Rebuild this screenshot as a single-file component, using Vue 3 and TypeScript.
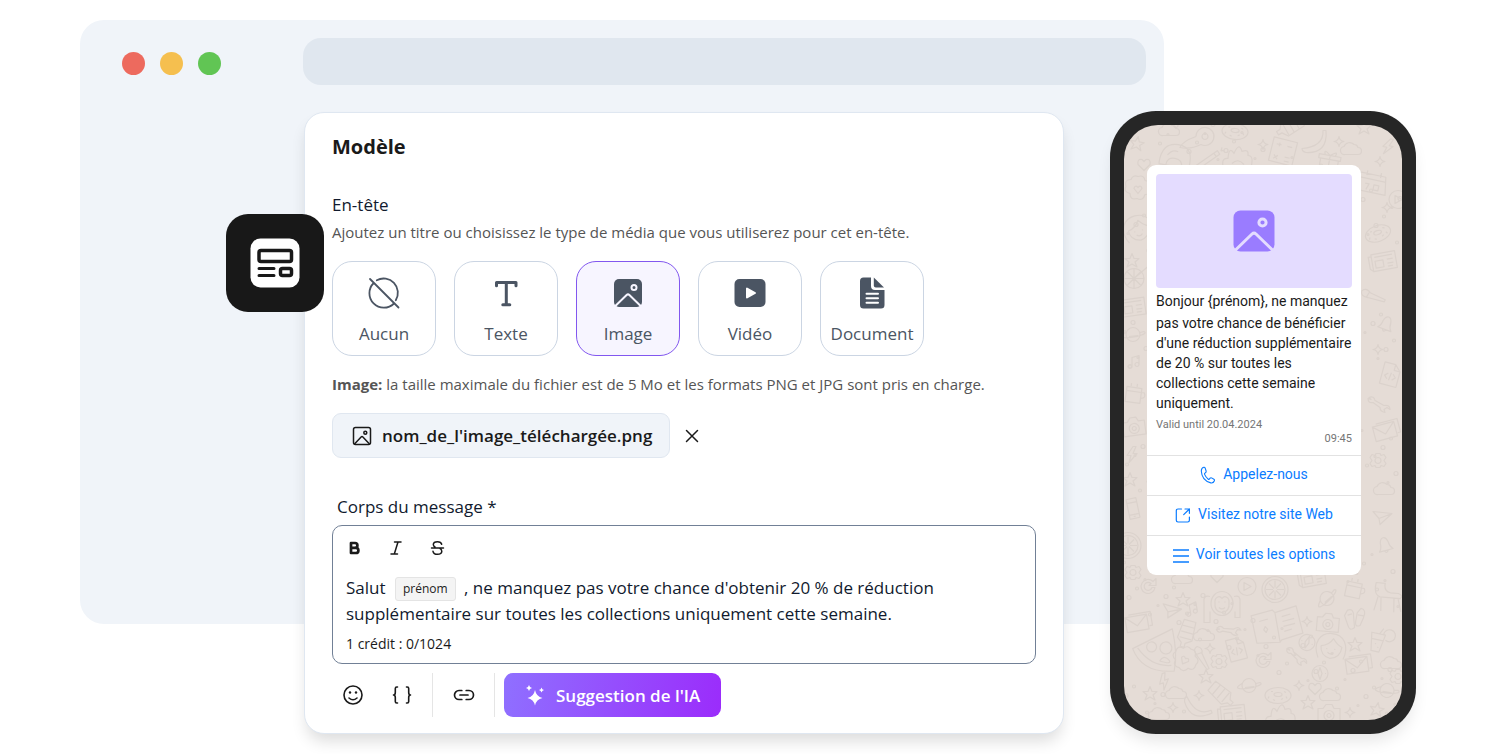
<script setup lang="ts">
import { ref } from 'vue'

type Kind = 'none' | 'text' | 'image' | 'video' | 'document'
interface HeaderOption { kind: Kind; label: string }
type Doodle = [shape: string, x: number, y: number, turn: number]
interface Dot { x: number; y: number; r: number }

const options: HeaderOption[] = [
  { kind: 'none', label: 'Aucun' },
  { kind: 'text', label: 'Texte' },
  { kind: 'image', label: 'Image' },
  { kind: 'video', label: 'Vidéo' },
  { kind: 'document', label: 'Document' },
]
const selected = ref<Kind>('image')

const shapes: Record<string, string> = {
  star: 'M0-7 2-2 7-2 3 1.500 5 6.500 0 3.500-5 6.500-3 1.500-7-2-2-2Z',
  spark: 'M0-5Q.6-.6 5 0 .6.6 0 5-.6.6-5 0-.6-.6 0-5Z',
  cloud: 'M-7 5a4 4 0 0 1-1-8 6 6 0 0 1 10-2 4 4 0 0 1 4 3 3.500 3.500 0 0 1 0 7Z',
  banana: 'M8-11Q9 5-13 7-13 10-9 11 13 12 11-11Z',
  donut: 'M-13 0a13 8 0 1 0 26 0 13 8 0 1 0-26 0M-4-1a4 2 0 1 0 8 0 4 2 0 1 0-8 0M-9 1l-1 2M-5 4l2 1M3 4l2-1M8 1l1 2M6-4l2 1M-7-4l2 0',
  orange: 'M-13 0a13 13 0 1 0 26 0 13 13 0 1 0-26 0M-10 0a10 10 0 1 0 20 0 10 10 0 1 0-20 0M0-2V-9M0 2V9M-2 0H-9M2 0H9M-1-1-6-6M1 1 6 6M1-1 6-6M-1 1-6 6',
  play: 'M-9 0a9 9 0 1 0 18 0 9 9 0 1 0-18 0M-3-4 4 0-3 4Z',
  monkey: 'M-11 0a11 12 0 1 0 22 0 11 12 0 1 0-22 0M-7-1a4 5 0 0 1 7-4 4 5 0 0 1 7 4Q8 8 0 9-8 8-7-1M-3-2v1M3-2v1M-3 4Q0 7 3 4M-12-7q-7-2-6 6v20h6V8M12-7q7-2 6 6v15h-5V8',
  book: 'M-24-13-2-15 0-12 22-15 24 13 2 16 0 18-23 15ZM0-12 0 18M-17-6-8-7M-14 3l2-3 2 3-2 3ZM6-7 15-8M6-2 18-3M6 3 18 2M6 8 14 7',
  camera: 'M-11-5h5l3-4h6l2 4h6V9h-22ZM-5 2a5 5 0 1 0 10 0 5 5 0 1 0-10 0M-2 2a2 2 0 1 0 4 0 2 2 0 1 0-4 0',
  face: 'M-12 12q-5-10-1-18 4-7 13-7 9 0 13 7 4 8 0 18M-10 0Q-2-1 2-8 6-2 11 0 10 11 0 12-10 10-10 0M-4 2v1M4 2v1M-3 6Q0 9 3 6',
  envelope: 'M-13-8h22V7h-22ZM-13-8-2 2 9-8M-9-10h22V4h-3',
  pizza: 'M-22-4 20-18Q22 8 16 24-16 22-22-4ZM-17-4Q-6 17 14 18M-8-3a5 5 0 1 0 10 0 5 5 0 1 0-10 0M5 0a6 6 0 1 0 12 0 6 6 0 1 0-12 0M3 12q5-6 9 0t-9 0',
  tube: 'M-6-12h12l1 19-6 4v4h-4v-4l-5-4ZM-6-6H6M-6 0H6M-6 6H6',
  file: 'M-8-11h11l6 6v16h-17ZM3-11v6h6M-2-1-5 2-2 5M3-1 6 2 3 5M1-2 0 6',
  gear: 'M-2-7h4l1 2 3-1 2 3-2 3 2 3-2 3-3-1-1 2h-4l-1-2-3 1-2-3 2-3-2-3 2-3 3 1ZM-3 0a3 3 0 1 0 6 0 3 3 0 1 0-6 0',
  compass: 'M-8 0a8 8 0 1 0 16 0 8 8 0 1 0-16 0M0-6 2 0 0 6-2 0ZM-6 0h1M5 0h1',
  planet: 'M-7 0a7 7 0 1 0 14 0 7 7 0 1 0-14 0M-7-2q-7 4-3 5t14-1Q15-1 11-3L7-2M-4 2 5 1',
  news: 'M-13-8h24V9h-24ZM-10-5H8M-10-1h8v7h-8ZM2-1h6M2 3h6M2 6h5M-13-6h-3V6l3 3',
  music: 'M-3 4v-9l7-2v9M-7 4a2 2 0 1 0 4 0 2 2 0 1 0-4 0M0 2a2 2 0 1 0 4 0 2 2 0 1 0-4 0',
  bolt: 'M1-8-5 1h4l-2 7L5-1H1l3-7Z',
  drink: 'M-7-8H7L4 10H-4ZM-6-2H6M1-8 4-14M5-8a6 6 0 1 1 3 5M-1 2v1M2 5v1',
  wrench: 'M-10-5q5-2 6 3L5 3q6-1 6 4L8 5 5 7 6 10Q1 9 1 5L-6 0Q-11 1-11-4l3 1Z',
  brush: 'M-4-11Q-9-8-4-2L6 12 8 11 1-4Q2-10-4-11M-5-3 1-5',
  mug: 'M-8-7h15v15h-15ZM-8-3H7M7-3h3q3 5-3 6M-4-11v3M2-11v3',
  chair: 'M-12-14Q-14-2-7 0h20Q17-3 11-5H3q-7-1-6-9ZM-9 0-12 14M-6 0-5 14M7 0 8 14M11 0 15 13',
  sandals: 'M-9-8Q-3-11-2-3L1 8Q-3 13-6 7L-11-2ZM-8-3l4-2M4-12Q10-12 8-3L6 5Q1 8 1 2V-7ZM2-5l6 0',
  plane: 'M-10-6 9-4-3 7-4 1ZM-4 1 9-4',
  dice: 'M-12-12H12V12H-12ZM-8-6h5M-5-8v4M3-6h5M-8 5l4 4M-8 9l4-4M3 5h5M3 9h5',
  flame: 'M-14 12q-4-13 4-12 1-13 6-5 5-12 8-2 7-3 6 4 7 0 2 15M-14 12H12M-6 5q6-6 12 1',
  pot: 'M-16 8q-1-22 16-22T14 8M-16 8H14M-9-2q4-7 10-5M-9 8q0-8 8-8t8 8',
  flower: 'M0-12q6-2 7 4 7 1 5 7 2 7-5 7-2 7-8 4-7 2-7-5-7-2-4-7-2-7 5-7 2-5 7-3ZM0 5-4 0q1-4 4-1 3-3 4 1Z',
  calendar: 'M-14-10H12l3 18h-28ZM-7-13v5M7-13v5M-14-5H13M-7 0h4l-2 6M2 0h5v5H2Z',
  gift: 'M-9-3H9V9H-9ZM-11-7h22v4h-22ZM0-7V9M0-7q-8-7-5 0M0-7q8-7 5 0',
  wheel: 'M-10 0a10 10 0 1 0 20 0 10 10 0 1 0-20 0M0-10V10M-10 0H10M-7-7 7 7M-7 7 7-7M0 0 14-12h5',
  wand: 'M-12 10 6-8 9-5-9 13ZM3-5 6-2M10-12v4M13-9h-4',
  heart: 'M0 6-6 0q-1-6 4-5l2 2 2-2q5-1 4 5Z',
  turn: 'M5-5a7 7 0 1 0 2 6h-3a4 4 0 1 1-1-4L1-1h7v-7Z',
  egg: 'M-6 0a9 9 0 1 1 5 8Q-11 13-22 11-20 5-6 0M0 0a3 3 0 1 0 6 0 3 3 0 1 0-6 0',
  bell: 'M-7 5q3-3 3-8 1-5 4-5t4 5q0 5 3 8ZM-2 5q2 4 4 0',
  phone: 'M-5-10h10v20h-10ZM-5-6H5M-5 6H5M-1 8h2',
}

const doodles: Doodle[] = [
  ['egg', 78, 12, 0], ['donut', 111, 7, 5], ['dice', 159, 27, 14], ['banana', 191, 17, 0], ['cloud', 228, 25, 0],
  ['bolt', 264, 22, 12], ['star', 13, 19, 10], ['spark', 139, 20, 0], ['spark', 215, 17, 0], ['spark', 256, 37, 0],
  ['flame', 114, 34, 0], ['pot', 52, 34, 10], ['wand', 86, 33, 10], ['gift', 205, 38, 10], ['heart', 20, 40, 0],
  ['cloud', 46, 6, 0], ['tube', 167, 2, 60], ['star', 240, 3, 0], ['flower', 14, 64, 0], ['calendar', 248, 60, 12],
  ['spark', 263, 83, 0], ['play', 274, 75, 0], ['face', 14, 104, -15], ['donut', 254, 109, -20], ['star', 8, 136, 0],
  ['news', 261, 136, -10], ['wheel', 10, 154, 0], ['brush', 248, 172, -40], ['news', 10, 182, -8], ['bell', 262, 200, 20],
  ['planet', 9, 210, 0], ['spark', 254, 225, 0], ['music', 11, 238, 0], ['file', 266, 250, 15], ['mug', 10, 270, 8],
  ['wrench', 255, 278, 0], ['camera', 10, 302, -8], ['envelope', 263, 307, -15], ['bolt', 8, 330, 0], ['gear', 254, 336, 0],
  ['star', 6, 355, 0], ['cloud', 261, 365, 0], ['phone', 9, 384, -12], ['plane', 259, 393, 0], ['orange', 4, 421, 0],
  ['bell', 261, 421, -15], ['gear', 9, 448, 0], ['turn', 24, 462, 0], ['cloud', 59, 454, 0], ['heart', 93, 452, 0],
  ['play', 123, 462, 0], ['orange', 151, 465, 0], ['news', 190, 452, -10], ['planet', 203, 474, -35], ['mug', 230, 465, 12],
  ['chair', 263, 473, 5], ['star', 59, 475, 0], ['monkey', 98, 479, 0], ['music', 69, 485, -10], ['plane', 48, 487, 10],
  ['envelope', 15, 499, -10], ['tube', 63, 508, 15], ['wrench', 104, 504, -25], ['book', 153, 500, -10], ['spark', 183, 497, 0],
  ['camera', 204, 498, 5], ['sandals', 231, 495, 10], ['drink', 253, 517, 12], ['cloud', 81, 511, 0], ['pizza', 31, 525, -8],
  ['brush', 77, 533, 0], ['spark', 86, 524, 0], ['file', 112, 525, -15], ['gear', 95, 537, 0], ['turn', 139, 536, 0],
  ['wrench', 173, 530, 10], ['compass', 183, 518, 20], ['face', 207, 522, 5], ['star', 231, 520, 0], ['envelope', 235, 541, -8],
  ['cloud', 268, 539, 0], ['flower', 61, 535, 30], ['bolt', 40, 557, -20], ['star', 82, 552, 0], ['compass', 196, 549, 0],
  ['planet', 125, 561, 0], ['spark', 175, 561, 0], ['heart', 191, 564, 0], ['planet', 263, 566, 15], ['star', 26, 569, 0],
  ['cloud', 53, 569, 0], ['spark', 75, 571, 0], ['tube', 97, 569, -50], ['donut', 154, 571, 0], ['cloud', 207, 571, 0],
  ['star', 184, 578, 0], ['banana', 74, 582, 70], ['spark', 49, 583, 0], ['cloud', 36, 590, 0], ['news', 110, 589, -6],
  ['camera', 205, 589, 0], ['spark', 226, 588, 0], ['star', 253, 585, 10], ['flame', 157, 592, 0], ['gear', 274, 552, 0],
]

const dots: Dot[] = Array.from({ length: 230 }, (_, i) => ({
  x: (i * 89 + 7) % 277,
  y: (i * 157 + 11) % 595,
  r: 1 + (i % 3) / 2,
}))
</script>

<template>
  <main class="stage">
    <div class="browser">
      <span class="dot red"></span><span class="dot amber"></span><span class="dot green"></span>
      <div class="address"></div>
    </div>

    <section class="card" aria-labelledby="card-title">
      <div class="badge">
        <svg width="98" height="98" viewBox="0 0 98 98" aria-hidden="true">
          <rect x="24.500" y="24.500" width="49" height="49" rx="10" fill="#fff" />
          <g fill="none" stroke="#181818" stroke-width="3.500" stroke-linecap="round">
            <rect x="33" y="36.500" width="32.500" height="11" rx="2" />
            <path d="M33 54.500h15M33 61.500h15" stroke-width="3" />
            <rect x="54.500" y="54.500" width="11" height="7" rx="2" />
          </g>
        </svg>
      </div>

      <h1 id="card-title">Modèle</h1>
      <h2>En-tête</h2>
      <p class="hint">Ajoutez un titre ou choisissez le type de média que vous utiliserez pour cet en-tête.</p>

      <div class="options">
        <button v-for="o in options" :key="o.kind" type="button" class="option"
          :class="{ active: selected === o.kind }" :aria-pressed="selected === o.kind" @click="selected = o.kind">
          <svg width="34" height="34" viewBox="0 0 34 34" aria-hidden="true">
            <g v-if="o.kind === 'none'" fill="none" stroke="#4b5563" stroke-width="1.800" stroke-linecap="round">
              <path d="M9.800 4.200a14.300 14.300 0 0 1 19 20M27 27.500A14.300 14.300 0 0 1 6.700 7M3 3l28.500 28.500" />
            </g>
            <path v-else-if="o.kind === 'text'" fill="none" stroke="#4b5563" stroke-width="3" stroke-linecap="round"
              stroke-linejoin="round" d="M7.500 9.700V6.500h19.500v3.200M17.300 6.500v22.200M13.800 28.700h7" />
            <g v-else-if="o.kind === 'image'">
              <rect x="3" y="3" width="28" height="28" rx="5" fill="#4b5563" />
              <circle cx="23" cy="11.500" r="2.500" fill="none" stroke="#f7f5ff" stroke-width="2" />
              <path d="M3.800 30.500 15.600 19q1.400-1.300 2.800 0l11.800 11.500" fill="none" stroke="#f7f5ff" stroke-width="2" />
            </g>
            <g v-else-if="o.kind === 'video'">
              <rect x="1.500" y="3" width="31" height="28" rx="5" fill="#4b5563" />
              <path d="M14 12.500v9l8-4.500Z" fill="#fff" stroke="#fff" stroke-width="2" stroke-linejoin="round" />
            </g>
            <g v-else>
              <path d="M8.500 1.500H16V10q0 4 4 4h9.500v15q0 3.500-3.500 3.500H8.500Q5 32.500 5 29V5q0-3.500 3.500-3.500Z" fill="#4b5563" />
              <path d="M18.800 1.500 29 11.400h-8.200q-2 0-2-2Z" fill="#4b5563" />
              <path d="M11.500 17.800h11.500M11.500 22.300h11.500M11.500 26.800h11.500" stroke="#fff" stroke-width="2" stroke-linecap="round" />
            </g>
          </svg>
          <span>{{ o.label }}</span>
        </button>
      </div>

      <p class="note"><b>Image:</b> la taille maximale du fichier est de 5 Mo et les formats PNG et JPG sont pris en charge.</p>

      <div class="upload">
        <div class="file">
          <svg width="20" height="20" viewBox="0 0 20 20" fill="none" stroke="#1a1a1a" stroke-width="1.500" aria-hidden="true">
            <rect x="1.500" y="1.500" width="17" height="17" rx="2" />
            <circle cx="13.300" cy="6.700" r="1.500" />
            <path d="m2.500 18 6.600-7q.9-.9 1.800 0l6.600 7" />
          </svg>
          <span>nom_de_l'image_téléchargée.png</span>
        </div>
        <button type="button" class="bare" aria-label="Supprimer le fichier">
          <svg width="14" height="14" viewBox="0 0 14 14" stroke="#1a1a1a" stroke-width="1.500" stroke-linecap="round"><path d="m1.500 1.500 11 11m0-11-11 11" /></svg>
        </button>
      </div>

      <h2 id="body-label" class="body-label">Corps du message *</h2>
      <div class="editor">
        <div class="format">
          <button type="button" class="bare" aria-label="Gras">
            <svg width="18" height="18" viewBox="0 0 18 18" fill="none" stroke="#1a1a1a" stroke-width="2.700" stroke-linejoin="round"><path d="M5 4h4a2.400 2.400 0 0 1 0 4.800H5Zm0 4.800h4.800a2.600 2.600 0 0 1 0 5.200H5Z" /></svg>
          </button>
          <button type="button" class="bare" aria-label="Italique">
            <svg width="18" height="18" viewBox="0 0 18 18" fill="none" stroke="#1a1a1a" stroke-width="1.500" stroke-linecap="round"><path d="M7.500 3H14M4 15h6.500M11 3 7.300 15" /></svg>
          </button>
          <button type="button" class="bare" aria-label="Barré">
            <svg width="18" height="18" viewBox="0 0 18 18" fill="none" stroke="#1a1a1a" stroke-width="1.500" stroke-linecap="round"><path d="M3.500 9h12M13.700 5.300Q13 2.700 9.500 2.700q-4 0-4.200 2.700Q5.200 7.200 7 8M5 12.300q.5 3 4.500 3 4.200 0 4.300-3 0-2-2-3" /></svg>
          </button>
        </div>
        <div class="message" contenteditable="true" role="textbox" aria-multiline="true" aria-labelledby="body-label" spellcheck="false">Salut <span class="chip">prénom</span> , ne manquez pas votre chance d'obtenir 20 % de réduction supplémentaire sur toutes les collections uniquement cette semaine.</div>
        <div class="count">1 crédit : 0/1024</div>
      </div>

      <div class="tools">
        <button type="button" class="bare" aria-label="Emoji">
          <svg width="22" height="22" viewBox="0 0 22 22" fill="none" stroke="#1a1a1a" stroke-width="1.600" stroke-linecap="round">
            <circle cx="11" cy="11" r="9" /><path d="M7 14q4 3.500 8 0" />
            <circle cx="8" cy="8.500" r="1.200" fill="#1a1a1a" stroke="none" /><circle cx="14" cy="8.500" r="1.200" fill="#1a1a1a" stroke="none" />
          </svg>
        </button>
        <button type="button" class="bare" aria-label="Variable">
          <svg width="22" height="22" viewBox="0 0 22 22" fill="none" stroke="#1a1a1a" stroke-width="1.600" stroke-linecap="round" stroke-linejoin="round">
            <path d="M6.500 3H5.800Q4.300 3 4.300 4.500v4Q4.300 11 2.500 11q1.800 0 1.800 2.500v4Q4.300 19 5.800 19h.7M15.500 3h.7q1.500 0 1.500 1.500v4q0 2.500 1.800 2.500-1.800 0-1.800 2.500v4q0 1.500-1.500 1.500h-.7" />
          </svg>
        </button>
        <span class="rule"></span>
        <button type="button" class="bare" aria-label="Lien">
          <svg width="22" height="22" viewBox="0 0 22 22" fill="none" stroke="#1a1a1a" stroke-width="1.700" stroke-linecap="round">
            <path d="M8.800 6.500H6a4.500 4.500 0 0 0 0 9h2.800M13.200 6.500H16a4.500 4.500 0 0 1 0 9h-2.800M7 11h8" />
          </svg>
        </button>
        <span class="rule"></span>
        <button type="button" class="ai">
          <svg width="20" height="22" viewBox="0 0 20 22" fill="#fff" aria-hidden="true">
            <path d="M10 6q1.300 6.700 7.500 8-6.200 1.300-7.500 7.500-1.300-6.200-7.500-7.500 6.200-1.300 7.500-8Z" />
            <path d="M4 1q.5 2.500 3 3-2.500.5-3 3-.5-2.500-3-3 2.500-.5 3-3ZM16.500 3.500q.4 2 2.500 2.500-2.100.5-2.500 2.500-.4-2-2.500-2.500 2.100-.5 2.500-2.500Z" />
          </svg>
          Suggestion de l'IA
        </button>
      </div>
    </section>

    <aside class="phone">
      <div class="screen">
        <svg class="wallpaper" viewBox="0 0 278 596" preserveAspectRatio="xMidYMid slice" aria-hidden="true">
          <path v-for="(d, i) in doodles" :key="i" :d="shapes[d[0]]" :transform="`translate(${d[1]} ${d[2]}) rotate(${d[3]})`" />
          <circle v-for="(c, i) in dots" :key="'c' + i" :cx="c.x" :cy="c.y" :r="c.r" />
        </svg>
        <article class="bubble">
          <div class="picture">
            <svg width="42" height="42" viewBox="0 0 42 42" aria-hidden="true">
              <rect x="0.500" y="0.500" width="41" height="41" rx="7" fill="#9a7cff" />
              <circle cx="29.500" cy="12.500" r="3.600" fill="none" stroke="#e4dcff" stroke-width="3" />
              <path d="M2 40.500 19 24q2-1.800 4 0l17 16.500" fill="none" stroke="#e4dcff" stroke-width="3" />
            </svg>
          </div>
          <p class="greeting">Bonjour {prénom}, ne manquez</p>
          <p class="text">pas votre chance de bénéficier d'une réduction supplémentaire de 20 % sur toutes les collections cette semaine uniquement.</p>
          <p class="valid">Valid until 20.04.2024</p>
          <time class="time">09:45</time>
          <a class="action" href="#">
            <svg width="16" height="18" viewBox="0 0 16 18" fill="none" stroke="#0a7cff" stroke-width="1.100" stroke-linejoin="round" aria-hidden="true">
              <path d="M1.300 5Q1.300 2 3.800 1.300q1-.2 1.400.8L6.100 5q.3.900-.4 1.500l-.8.700q-.6.500-.3 1.200 1.300 3 3.700 4.800.6.400 1.100-.1l.7-.9q.6-.7 1.500-.3l2.300 1.400q1 .6.500 1.500-1 2.500-3.600 2.100Q1.800 14.500 1.300 5Z" />
            </svg>
            Appelez-nous
          </a>
          <a class="action" href="#">
            <svg width="16" height="18" viewBox="0 0 16 18" fill="none" stroke="#0a7cff" stroke-width="1.200" stroke-linecap="round" stroke-linejoin="round" aria-hidden="true">
              <path d="M6.500 3H3Q1.300 3 1.300 4.700v9.600Q1.300 16 3 16h9.700q1.700 0 1.700-1.700V11M10 3h4.400v4.300M14.400 3 8.700 8.700" />
            </svg>
            Visitez notre site Web
          </a>
          <a class="action" href="#">
            <svg width="16" height="18" viewBox="0 0 16 18" fill="none" stroke="#0a7cff" stroke-width="1.300" aria-hidden="true">
              <path d="M0 4h16M0 10h16M0 16h16" />
            </svg>
            Voir toutes les options
          </a>
        </article>
      </div>
    </aside>
  </main>
</template>

<style>
body {
  margin: 0;
  background: #fff;
}
</style>

<style scoped>
.stage {
  display: grid;
  grid-template-columns: 224px minmax(0, 1fr) 46px 54px 252px;
  grid-template-rows: 91px auto 110px;
  padding: 20px 80px;
  color: #1a1a1a;
  font-family: 'Open Sans', 'Noto Sans', sans-serif;
}

h1,
h2,
p {
  margin: 0;
}

button {
  font: inherit;
  cursor: pointer;
}

.bare {
  display: flex;
  padding: 0;
  border: 0;
  background: none;
}

.browser {
  grid-area: 1 / 1 / 3 / 5;
  display: flex;
  align-items: flex-start;
  gap: 15px;
  padding: 18px 18px 0 42px;
  border-radius: 24px;
  background: #f0f4f9;
}

.dot {
  width: 23px;
  height: 23px;
  margin-top: 14px;
  border-radius: 50%;
}

.red { background: #ed6a5e; }
.amber { background: #f5bf4f; }
.green { background: #61c554; }

.address {
  flex: 1;
  height: 47px;
  margin-left: 67px;
  border-radius: 18px;
  background: #e0e7ef;
}

.card {
  grid-area: 2 / 2 / 4 / 3;
  position: relative;
  margin-top: 1px;
  padding: 20px 27px 16px;
  border: 1px solid #dfe7f1;
  border-radius: 20px;
  background: #fff;
  box-shadow: 0 10px 16px -3px rgb(0 0 0 / 14%);
}

.badge {
  position: absolute;
  top: 101px;
  left: -79px;
  display: flex;
  overflow: hidden;
  border-radius: 22px;
  background: #181818;
}

h1 {
  font-size: 20px;
  font-weight: 700;
  line-height: 28px;
}

h2 {
  margin-top: 32px;
  color: #111a2e;
  font-size: 17px;
  font-weight: 400;
  line-height: 24px;
}

.hint,
.note {
  color: #555;
  font-size: 15px;
  line-height: 24px;
}

.hint {
  margin-top: 3px;
}

.note {
  margin-top: 16px;
}

.options {
  display: flex;
  gap: 18px;
  margin-top: 17px;
}

.option {
  display: flex;
  flex-direction: column;
  align-items: center;
  gap: 12px;
  width: 104px;
  height: 95px;
  padding: 14px 0 0;
  border: 1px solid #cbd5e3;
  border-radius: 20px;
  background: #fff;
  color: #4b5563;
  font-size: 17px;
  font-weight: 500;
  line-height: 24px;
}

.option.active {
  border-color: #8257ef;
  background: #f7f5ff;
}

.upload {
  display: flex;
  align-items: center;
  gap: 15px;
  margin-top: 17px;
}

.file {
  display: flex;
  align-items: center;
  gap: 10px;
  height: 43px;
  padding: 0 17px 0 19px;
  border: 1px solid #e0e7f0;
  border-radius: 9px;
  background: #f0f4f9;
  font-size: 17px;
  font-weight: 600;
}

.body-label {
  margin: 37px 0 0 5px;
}

.editor {
  margin-top: 6px;
  padding: 13px 13px 7px;
  border: 1px solid #718096;
  border-radius: 10px;
}

.format {
  display: flex;
  gap: 23px;
  margin-bottom: 18px;
}

.message {
  outline: none;
  color: #111a2e;
  font-size: 17px;
  line-height: 26px;
}

.chip {
  display: inline-block;
  margin: 0 4px 0 5px;
  padding: 0 7px;
  border: 1px solid #e4e4e4;
  border-radius: 3px;
  background: #f4f4f4;
  color: #222;
  font-size: 12px;
  line-height: 22px;
  vertical-align: 1px;
}

.count {
  margin-top: 5px;
  font-size: 14px;
  line-height: 24px;
}

.tools {
  display: flex;
  align-items: center;
  height: 44px;
  margin-top: 9px;
  padding-left: 10px;
}

.tools .bare + .bare {
  margin-left: 27px;
}

.rule {
  width: 1px;
  height: 44px;
  margin: 0 9px 0 19px;
  background: #e5e5e5;
}

.rule + .bare {
  margin-left: 11px;
}

.ai {
  display: flex;
  align-items: center;
  gap: 11px;
  height: 44px;
  padding: 0 21px;
  border: 0;
  border-radius: 9px;
  background: linear-gradient(100deg, #8f70ff, #9b2cfb);
  color: #fff;
  font-size: 17px;
  font-weight: 600;
}

.phone {
  grid-area: 2 / 4 / 4 / 6;
  z-index: 1;
  display: flex;
  padding: 14px;
  border-radius: 46px;
  background: #262626;
  box-shadow: 0 10px 16px -3px rgb(0 0 0 / 10%);
}

.screen {
  position: relative;
  flex: 1;
  overflow: hidden;
  padding: 40px 41px 0 23px;
  border-radius: 34px;
  background: #e5dcd6;
  font-family: Roboto, sans-serif;
}

.wallpaper {
  position: absolute;
  inset: 0;
  width: 100%;
  height: 100%;
  fill: none;
  stroke: #dbd2cc;
  stroke-width: 1.2;
  stroke-linejoin: round;
}

.bubble {
  position: relative;
  display: flex;
  flex-direction: column;
  overflow: hidden;
  padding-top: 9px;
  border-radius: 9px;
  background: #fff;
  font-size: 14px;
  line-height: 20px;
}

.picture {
  display: grid;
  place-items: center;
  height: 114px;
  margin: 0 9px 3px;
  border-radius: 4px;
  background: #e4dcff;
}

.bubble p,
.time {
  padding: 0 9px;
}

.greeting {
  margin-bottom: 2px;
}

.bubble .text {
  padding-right: 4px;
}

.bubble .valid,
.time {
  color: #757575;
  font-size: 11px;
  line-height: 14px;
}

.bubble .valid {
  margin-top: 5px;
}

.time {
  align-self: flex-end;
  margin-bottom: 9px;
}

.action {
  display: flex;
  justify-content: center;
  gap: 7px;
  padding: 8px 0 11px;
  border-top: 1px solid #e2e2e2;
  color: #0a7cff;
  text-decoration: none;
}

.action svg {
  margin-top: 2px;
}
</style>
